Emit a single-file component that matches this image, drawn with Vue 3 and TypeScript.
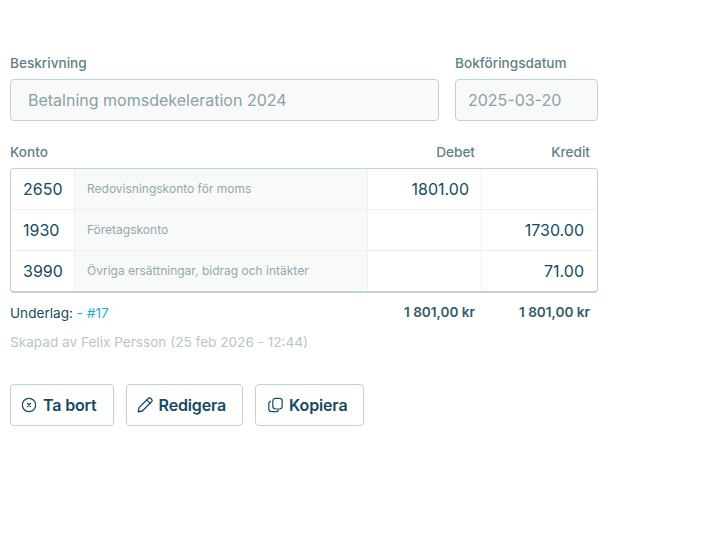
<script setup lang="ts">
interface Row { konto: string; namn: string; debet: string; kredit: string }
const rows: Row[] = [
  { konto: '2650', namn: 'Redovisningskonto för moms', debet: '1801.00', kredit: '' },
  { konto: '1930', namn: 'Företagskonto', debet: '', kredit: '1730.00' },
  { konto: '3990', namn: 'Övriga ersättningar, bidrag och intäkter', debet: '', kredit: '71.00' },
]
</script>

<template>
  <main class="page">
    <div class="fields">
      <label class="field grow">
        <span class="label">Beskrivning</span>
        <span class="input">Betalning momsdekeleration 2024</span>
      </label>
      <label class="field date">
        <span class="label">Bokföringsdatum</span>
        <span class="input">2025-03-20</span>
      </label>
    </div>

    <div class="heads">
      <span class="label">Konto</span>
      <span class="label right">Debet</span>
      <span class="label right">Kredit</span>
    </div>

    <div class="table">
      <div v-for="row in rows" :key="row.konto" class="row">
        <div class="cell konto">{{ row.konto }}</div>
        <div class="cell namn">{{ row.namn }}</div>
        <div class="cell amount debet">{{ row.debet }}</div>
        <div class="cell amount">{{ row.kredit }}</div>
      </div>
    </div>

    <div class="totals">
      <span class="underlag">Underlag: <span class="link">- #17</span></span>
      <strong class="total">1 801,00 kr</strong>
      <strong class="total">1 801,00 kr</strong>
    </div>
    <p class="meta">Skapad av Felix Persson (25 feb 2026 - 12:44)</p>

    <div class="actions">
      <button class="btn" type="button">
        <svg class="icon" width="16" height="16" viewBox="0 0 24 24" fill="none" stroke="currentColor" stroke-width="1.8" stroke-linecap="round">
          <circle cx="12" cy="12" r="10" />
          <path d="M9.8 9.8l4.4 4.4M14.2 9.8l-4.4 4.4" stroke-width="2" />
        </svg>
        Ta bort
      </button>
      <button class="btn" type="button">
        <svg class="icon pencil" width="18" height="18" viewBox="0 0 24 24" fill="none" stroke="currentColor" stroke-width="1.7" stroke-linejoin="round" stroke-linecap="round">
          <path d="M3 21l1-5.5L16.6 3a2 2 0 0 1 2.8 0l1.6 1.6a2 2 0 0 1 0 2.8L8.5 20 3 21z" />
          <path d="M14.5 5.5l4 4" />
        </svg>
        Redigera
      </button>
      <button class="btn" type="button">
        <svg class="icon copy" width="15" height="16" viewBox="0 0 22 24" fill="none" stroke="currentColor" stroke-width="1.8" stroke-linejoin="round" stroke-linecap="round">
          <rect x="7" y="2" width="14" height="16" rx="4" />
          <path d="M3.5 6.5A3.5 3.5 0 0 0 1 9.8V18a4 4 0 0 0 4 4h7a4 4 0 0 0 3.4-2" />
        </svg>
        Kopiera
      </button>
    </div>
  </main>
</template>

<style scoped>
.page {
  box-sizing: border-box;
  width: 598px;
  margin: 0;
  padding: 55px 0 0 10px;
  font-family: Inter, "Liberation Sans", sans-serif;
  color: #154a60;
}
.fields {
  display: flex;
  gap: 16px;
}
.field {
  display: flex;
  flex-direction: column;
  gap: 7px;
}
.grow { width: 429px; }
.date { width: 143px; }
.label {
  font-size: 13.6px;
  line-height: 17px;
  font-weight: 500;
  color: #5f7f89;
}
.input {
  box-sizing: border-box;
  height: 42px;
  padding: 0 12px 0 17px;
  border: 1px solid #bfd2d5;
  border-radius: 4px;
  background: #f8fafa;
  color: #8aa1a8;
  font-size: 16px;
  line-height: 40px;
  white-space: nowrap;
}
.date .input { padding-left: 12px; }
.heads {
  display: grid;
  grid-template-columns: 1fr 114px 115px;
  margin-top: 23px;
}
.right {
  padding-right: 8px;
  text-align: right;
}
.table {
  margin-top: 7px;
  border: 1px solid #bfd2d5;
  border-bottom-width: 2px;
  border-radius: 4px;
  overflow: hidden;
}
.row {
  display: grid;
  grid-template-columns: 63px 293px 114px 1fr;
  height: 41px;
  border-top: 1px solid #ebf0f0;
  box-sizing: border-box;
}
.row:first-child { height: 40px; border-top: 0; }
.cell {
  display: flex;
  align-items: center;
  box-sizing: border-box;
  border-left: 1px solid #ebf0f0;
  font-size: 16px;
}
.cell:first-child { border-left: 0; }
.konto { padding-left: 12px; }
.namn {
  padding: 0 0 2px 12px;
  background: #f8fafa;
  font-size: 12px;
  color: #93a8ae;
}
.amount {
  justify-content: flex-end;
  padding-right: 13px;
}
.debet { padding-right: 12px; }
.totals {
  display: grid;
  grid-template-columns: 1fr 114px 115px;
  align-items: center;
  margin-top: 10px;
  height: 18px;
}
.underlag {
  padding-top: 2px;
  font-size: 13.6px;
  color: #154a60;
}
.link { color: #14b3cc; }
.total {
  padding-right: 8px;
  text-align: right;
  font-size: 13.6px;
  font-weight: 600;
  color: #345a68;
}
.meta {
  margin: 13px 0 0;
  font-size: 13.6px;
  line-height: 17px;
  color: #b8c6ca;
}
.actions {
  display: flex;
  gap: 12px;
  margin-top: 33px;
}
.btn {
  display: inline-flex;
  align-items: center;
  gap: 5px;
  height: 42px;
  padding: 0 16px 0 10px;
  border: 1px solid #bfd2d5;
  border-radius: 4px;
  background: #fff;
  color: #154a60;
  font-family: inherit;
  font-size: 16px;
  font-weight: 600;
  letter-spacing: -0.15px;
}
.icon { margin-right: 1px; }
.pencil { margin: 0 0 0 -1px; }
.copy { margin: 0 1px 0 2px; }
</style>
